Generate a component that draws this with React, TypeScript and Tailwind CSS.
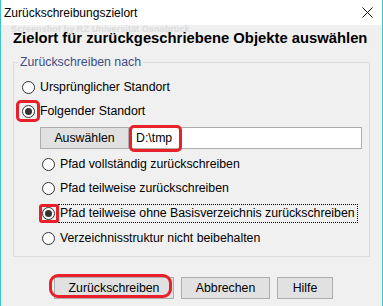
import React from "react";

const font = { fontFamily: '"Liberation Sans", Arial, sans-serif' };

const Radio: React.FC<{ checked?: boolean }> = ({ checked }) => (
    <span className="w-[13px] h-[13px] rounded-full border border-[#333333] bg-white flex items-center justify-center shrink-0">
        {checked && <span className="w-[7px] h-[7px] rounded-full bg-[#333333]" />}
    </span>
);

const RadioRow: React.FC<{
    label: string;
    checked?: boolean;
    indent: string;
    height: string;
    marked?: React.ReactNode;
    focused?: boolean;
}> = ({ label, checked, indent, height, marked, focused }) => (
    <div className={`flex items-center ${indent} ${height}`}>
        <span className="relative flex">
            <Radio checked={checked} />
            {marked}
        </span>
        <span
            className={`ml-[5px] leading-[15px] ${
                focused ? "outline outline-1 outline-dotted outline-black outline-offset-[1px] pr-[1px]" : ""
            }`}
        >
            {label}
        </span>
    </div>
);

export default function App() {
    return (
        <div
            className="w-[383px] h-[306px] bg-[#f0f0f0] border-x border-[#3fc6c8] flex flex-col relative text-black text-[12.3px]"
            style={font}
        >
            <div className="h-[25px] bg-white flex items-center justify-between pl-[3px] pr-[9px] text-[12px]">
                <span>Zurückschreibungszielort</span>
                <svg width="11" height="11" viewBox="0 0 11 11">
                    <path d="M0.5 0.5 L10.5 10.5 M10.5 0.5 L0.5 10.5" stroke="#111" strokeWidth="1" />
                </svg>
            </div>

            <span className="absolute left-[10px] top-[24px] text-[9.2px] font-bold text-[#dcdcdc] leading-[10px]">
                Screenshot by RZ Universität Osnabrück
            </span>

            <div className="mt-[5px] pl-[12px] h-[17px] leading-[17px] text-[14.8px] font-bold">
                Zielort für zurückgeschriebene Objekte auswählen
            </div>

            <fieldset className="mt-[8px] ml-[12px] w-[357px] border border-[#dcdcdc] pt-[5px] pb-[5px]">
                <legend className="ml-[4px] px-[2px] leading-[15px] text-[#3d4d88]">
                    Zurückschreiben nach
                </legend>
                <RadioRow label="Ursprünglicher Standort" indent="pl-[8px]" height="h-[24px]" />
                <RadioRow
                    label="Folgender Standort"
                    checked
                    indent="pl-[8px]"
                    height="h-[25px]"
                    marked={
                        <span className="absolute -left-[6px] -top-[5px] w-[24px] h-[22px] border-[3px] border-[#e8202a] rounded-[5px]" />
                    }
                />
                <div className="mt-[3px] h-[22px] flex pl-[26px]">
                    <div className="w-[89px] h-[22px] bg-[#e1e1e1] border border-[#adadad] flex items-center justify-center">
                        Auswählen
                    </div>
                    <div className="relative w-[233px] h-[22px] bg-white border border-[#adadad] flex items-center pl-[6px]">
                        D:\tmp
                        <span className="absolute -left-[1px] -top-[3px] w-[53px] h-[27px] border-[3px] border-[#e8202a] rounded-[5px]" />
                    </div>
                </div>
                <div className="mt-[3px]">
                    <RadioRow label="Pfad vollständig zurückschreiben" indent="pl-[28px]" height="h-[24px]" />
                    <RadioRow label="Pfad teilweise zurückschreiben" indent="pl-[28px]" height="h-[25px]" />
                    <RadioRow
                        label="Pfad teilweise ohne Basisverzeichnis zurückschreiben"
                        checked
                        focused
                        indent="pl-[28px]"
                        height="h-[24px]"
                        marked={
                            <span className="absolute -left-[3px] -top-[3px] w-[20px] h-[19px] border-[3px] border-[#e8202a] rounded-[3px]" />
                        }
                    />
                    <RadioRow label="Verzeichnisstruktur nicht beibehalten" indent="pl-[28px]" height="h-[26px]" />
                </div>
            </fieldset>

            <div className="mt-[20px] ml-[53px] flex gap-[7px]">
                <div className="relative w-[120px] h-[22px] bg-[#e1e1e1] border border-[#adadad] flex items-center justify-center">
                    Zurückschreiben
                    <span className="absolute -left-[6px] -top-[4px] w-[123px] h-[24px] border-[3px] border-[#e8202a] rounded-[9px]" />
                </div>
                <div className="w-[89px] h-[22px] bg-[#e1e1e1] border border-[#adadad] flex items-center justify-center">
                    Abbrechen
                </div>
                <div className="w-[56px] h-[22px] bg-[#e1e1e1] border border-[#adadad] flex items-center justify-center">
                    Hilfe
                </div>
            </div>
        </div>
    );
}
